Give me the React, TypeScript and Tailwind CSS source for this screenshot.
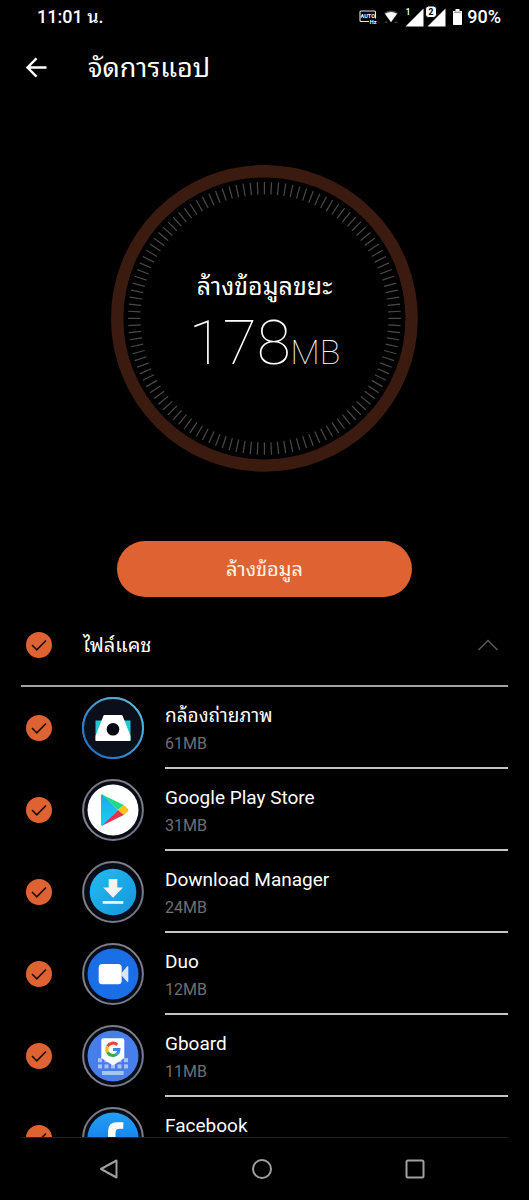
import { useState } from 'react';
import type { ReactNode } from 'react';

const TICKS = Array.from({ length: 120 }, (_, i) => i * 3);

function CameraIcon() {
  return (
    <>
      <circle cx="31" cy="31" r="30" fill="#0a0f1a" stroke="url(#ringBlue)" strokeWidth="2" />
      <path d="M13.500 23.500H48.500V44H13.500Z" fill="#1fc8cf" />
      <path d="M22.500 18H39.500Q40.300 18 40.600 18.800L48.500 39V43Q48.500 44 47.500 44H14.500Q13.500 44 13.500 43V39L21.400 18.800Q21.700 18 22.500 18Z" fill="#fff" />
      <circle cx="31" cy="32.300" r="6.300" fill="#05080e" />
    </>
  );
}

function PlayIcon() {
  return (
    <>
      <circle cx="31" cy="31" r="25.500" fill="#fff" />
      <path d="M19 16.500Q19 15 20.500 15.500L36 31L20.500 46.500Q19 47 19 45.500Z" fill="url(#playBlue)" />
      <path d="M19.500 15.200L41.700 26L36 31Z" fill="#22d886" />
      <path d="M41.700 25.900L46 30Q47 31 46 32L41.700 36.200L36 31Z" fill="#fbc21c" />
      <path d="M19.500 46.900L41.700 36.100L36 31Z" fill="#dd3450" />
    </>
  );
}

function DownloadIcon() {
  return (
    <>
      <circle cx="31" cy="31" r="23.300" fill="url(#downBlue)" />
      <path d="M26.700 18H35.300V26.500H41L31 36.700L21.300 26.500H26.700Z" fill="#f4f4f4" />
      <path d="M20.700 40H41.300V42.800H20.700Z" fill="#f4f4f4" />
    </>
  );
}

function DuoIcon() {
  return (
    <>
      <circle cx="31" cy="31" r="25.500" fill="#1a6ee6" />
      <path d="M39.500 30L45.200 23.300Q46.300 22.500 46.300 24V38Q46.300 39.500 45.200 38.700L39.500 32.500Z" fill="#dbe6fb" />
      <rect x="16.700" y="21" width="23" height="20.300" rx="3.500" fill="#fff" />
    </>
  );
}

function GboardIcon() {
  return (
    <>
      <circle cx="31" cy="31" r="25.500" fill="#487ee9" />
      <g fill="#a9c3f7">
        {[16, 22.5, 29, 35.5, 42].map(x => <rect key={x} x={x} y="33.200" width="4" height="4" />)}
        {[16, 22.5, 29, 35.5, 42].map(x => <rect key={x} x={x} y="39.400" width="4" height="4" />)}
        <rect x="20" y="46" width="21.600" height="4" />
      </g>
      <path d="M21 13.300H40.600Q42.300 13.300 42.300 15V33L31 40.500L19.300 33V15Q19.300 13.300 21 13.300Z" fill="#fff" />
      <g fill="none" strokeWidth="3">
        <path d="M35.200 19.800A6.200 6.200 0 0 0 25.500 21.400" stroke="#e94335" />
        <path d="M25.500 21.400A6.200 6.200 0 0 0 25.500 27.200" stroke="#fbbc05" />
        <path d="M25.500 27.200A6.200 6.200 0 0 0 34.800 29.100" stroke="#34a853" />
        <path d="M34.800 29.100A6.200 6.200 0 0 0 37 24.500H31" stroke="#4285f4" />
      </g>
    </>
  );
}

function FacebookIcon() {
  return (
    <>
      <circle cx="31" cy="31" r="25.500" fill="url(#fbBlue)" />
      <path d="M26 56V38.500H20.500V32H26V24.500Q26 15.200 35 15.200H41.300V21.800H37.500Q33.500 21.800 33.500 26V32H41L40 38.500H33.500V56Z" fill="#fff" />
    </>
  );
}

const APPS: { id: string; name: string; size?: string; icon: ReactNode }[] = [
  { id: 'camera', name: 'กล้องถ่ายภาพ', size: '61MB', icon: <CameraIcon /> },
  { id: 'play', name: 'Google Play Store', size: '31MB', icon: <PlayIcon /> },
  { id: 'download', name: 'Download Manager', size: '24MB', icon: <DownloadIcon /> },
  { id: 'duo', name: 'Duo', size: '12MB', icon: <DuoIcon /> },
  { id: 'gboard', name: 'Gboard', size: '11MB', icon: <GboardIcon /> },
  { id: 'facebook', name: 'Facebook', icon: <FacebookIcon /> },
];

function AppIcon({ children }: { children: ReactNode }) {
  return (
    <svg viewBox="0 0 62 62" className="size-[62px] shrink-0" aria-hidden="true">
      <defs>
        <linearGradient id="ringBlue" x1="1" y1="0" x2="0" y2="1"><stop offset="0" stopColor="#5fc3dc" /><stop offset="1" stopColor="#1766c4" /></linearGradient>
        <linearGradient id="ringGray" x1="0" y1="0" x2="1" y2="1"><stop offset="0" stopColor="#73737f" /><stop offset="0.5" stopColor="#858592" /><stop offset="1" stopColor="#6a7080" /></linearGradient>
        <linearGradient id="playBlue" x1="0" y1="0" x2="0" y2="1"><stop offset="0" stopColor="#1fa5ea" /><stop offset="1" stopColor="#19d2f5" /></linearGradient>
        <linearGradient id="downBlue" x1="0" y1="0" x2="1" y2="1"><stop offset="0" stopColor="#22bcf0" /><stop offset="1" stopColor="#1595dc" /></linearGradient>
        <linearGradient id="fbBlue" x1="0" y1="0" x2="0" y2="1"><stop offset="0" stopColor="#23a0f5" /><stop offset="1" stopColor="#0b6be6" /></linearGradient>
      </defs>
      <circle cx="31" cy="31" r="29.900" fill="#080c16" stroke="url(#ringGray)" strokeWidth="2" />
      {children}
    </svg>
  );
}

function RoundCheck({ id, checked, onChange }: { id: string; checked: boolean; onChange: () => void }) {
  return (
    <span className="grid size-[26px] shrink-0">
      <input id={id} type="checkbox" checked={checked} onChange={onChange}
        className="[grid-area:1/1] size-full appearance-none rounded-full border-2 border-[#df6332] checked:bg-[#df6332]" />
      {checked && (
        <svg viewBox="0 0 26 26" className="pointer-events-none [grid-area:1/1] size-full" fill="none" stroke="#1c0c06" strokeWidth="1.600" aria-hidden="true">
          <path d="M6 13L10.800 17.800L20 8.500" />
        </svg>
      )}
    </span>
  );
}

function StatusBar() {
  return (
    <div className="flex h-8 shrink-0 items-center justify-between pl-[37px] pr-7 pt-0.5 text-lg font-medium">
      <span>11:01 น.</span>
      <div className="flex items-center gap-[6px]">
        <svg viewBox="0 0 18 16" className="h-4 w-[18px]" aria-hidden="true">
          <path d="M10 12.500H2Q1 12.500 1 11.500V3Q1 2 2 2H15.500Q16.500 2 16.500 3V9.500" fill="none" stroke="#e8e8e8" strokeWidth="1.100" />
          <text x="8.800" y="9" textAnchor="middle" fontSize="5.500" fontWeight="700" fill="#fff">AUTO</text>
          <text x="10.800" y="14.800" fontSize="5.500" fontWeight="700" fill="#fff">Hz</text>
        </svg>
        <svg viewBox="0 0 16 16" className="size-4" aria-hidden="true">
          <path d="M1 4Q8 -1 15 4L8 13.500Z" fill="#4c4c4c" />
          <path d="M2 4.800Q8 1.400 14 4.800L8 13Z" fill="#fff" />
          <path d="M3 12l1.500 2h-3zM13 12l1.500 2h-3z" fill="#444" />
        </svg>
        <svg viewBox="0 0 41 22" className="h-[22px] w-[41px]" aria-hidden="true">
          <path d="M18.500 2.500V20.500H0.500Z" fill="#fff" />
          <text x="0.500" y="8.500" fontSize="9" fontWeight="500" fill="#fff">1</text>
          <path d="M40.500 2.500V20.500H22.500Z" fill="#fff" />
          <rect x="20.500" y="0" width="11" height="11.500" rx="3" fill="#fff" stroke="#000" strokeWidth="1" />
          <text x="26" y="8.800" textAnchor="middle" fontSize="8.500" fontWeight="800" fill="#000">2</text>
        </svg>
        <div className="flex items-center gap-1">
          <svg viewBox="0 0 11 18" className="h-[18px] w-[11px]" aria-hidden="true">
            <path d="M3.500 1H7.500V3H10V16.200Q10 17 9.200 17H1.800Q1 17 1 16.200V3H3.500Z" fill="#fff" />
            <path d="M2 4.200H9" stroke="#555" strokeWidth="0.800" />
          </svg>
          <span>90%</span>
        </div>
      </div>
    </div>
  );
}

export default function App() {
  const [selected, setSelected] = useState<string[]>(APPS.map(a => a.id));
  const [open, setOpen] = useState(true);

  const allSelected = selected.length === APPS.length;
  const toggle = (id: string) => setSelected(s => (s.includes(id) ? s.filter(x => x !== id) : [...s, id]));
  const toggleAll = () => setSelected(allSelected ? [] : APPS.map(a => a.id));

  return (
    <div className="flex h-screen flex-col overflow-hidden bg-black font-[Roboto,'Noto_Sans_Thai_Looped','Noto_Looped_Thai',Loma,Garuda,Waree,'Noto_Sans',sans-serif] text-white">
      <StatusBar />

      <header className="flex h-[72px] shrink-0 items-center gap-10 pl-6">
        <button type="button" aria-label="กลับ">
          <svg viewBox="0 0 24 24" className="size-6" fill="none" stroke="#fff" strokeWidth="2.400" aria-hidden="true">
            <path d="M22.500 11.500H4M12.500 2.300L3.500 11.500L12.500 20.700" />
          </svg>
        </button>
        <h1 className="text-[27px] leading-9">จัดการแอป</h1>
      </header>

      <main className="flex min-h-0 flex-1 flex-col overflow-hidden">
        {/* Gauge */}
        <div className="mt-[61px] grid aspect-square w-[58%] shrink-0 place-items-center self-center">
          <svg viewBox="0 0 307 307" className="[grid-area:1/1] size-full" fill="none" aria-hidden="true">
            <circle cx="153.500" cy="153.500" r="147.300" stroke="#3b1a0f" strokeWidth="12.400" />
            {TICKS.map(deg => (
              <path key={deg} d="M153.500 17V29.500" stroke="#4a4a4a" strokeWidth="1.200" transform={`rotate(${deg} 153.5 153.5)`} />
            ))}
          </svg>
          <div className="[grid-area:1/1] flex flex-col items-center gap-0.5 pt-5">
            <p className="text-[25px] leading-9">ล้างข้อมูลขยะ</p>
            <p className="text-[62px] font-thin leading-[72px]">178<span className="text-[34px]">MB</span></p>
          </div>
        </div>

        <button type="button" className="mt-[69px] h-14 w-[295px] max-w-full shrink-0 self-center rounded-full bg-[#df6332] text-xl text-[#fff3e8]">ล้างข้อมูล</button>

        {/* Cache group */}
        <div className="mx-[21px] mt-2 flex h-[82px] shrink-0 items-center border-b-2 border-[#a0a2a2] pl-[5px] pr-[9px]">
          <RoundCheck id="all" checked={allSelected} onChange={toggleAll} />
          <label htmlFor="all" className="flex-1 pl-[31px] text-xl leading-7">ไฟล์แคช</label>
          <button type="button" aria-label="ไฟล์แคช" aria-expanded={open} onClick={() => setOpen(!open)}>
            <svg viewBox="0 0 22 12" className="h-3 w-[22px]" fill="none" stroke="#5a5a5a" strokeWidth="1.500" aria-hidden="true">
              <path d="M1.500 11L11 1.500L20.500 11" />
            </svg>
          </button>
        </div>

        {open && (
          <ul className="min-h-0 flex-1 overflow-hidden">
            {APPS.map(app => (
              <li key={app.id} className="flex h-[82px] items-center pl-[26px] pr-[21px]">
                <RoundCheck id={app.id} checked={selected.includes(app.id)} onChange={() => toggle(app.id)} />
                <label htmlFor={app.id} className="flex h-full flex-1 items-center gap-[21px] pl-[30px]">
                  <AppIcon>{app.icon}</AppIcon>
                  <span className="flex h-full flex-1 flex-col border-b-2 border-[#c4c6c6] pt-[15px]">
                    <span className="text-[19px] leading-7">{app.name}</span>
                    {app.size && <span className="text-base leading-7 text-[#6f6f6f]">{app.size}</span>}
                  </span>
                </label>
              </li>
            ))}
          </ul>
        )}
      </main>

      <div className="mx-[21px] border-t border-[#242424]" />
      <nav className="grid h-[62px] shrink-0 grid-cols-3 items-center justify-items-center pl-[34px] pr-[38px]">
        <button type="button" aria-label="ย้อนกลับ">
          <svg viewBox="0 0 22 22" className="size-[22px]" fill="none" stroke="#a0a0a0" strokeWidth="2" strokeLinejoin="round" aria-hidden="true"><path d="M17.500 2.500V19.500L2 11Z" /></svg>
        </button>
        <button type="button" aria-label="หน้าแรก">
          <svg viewBox="0 0 22 22" className="size-[22px]" fill="none" stroke="#a0a0a0" strokeWidth="2" aria-hidden="true"><circle cx="11" cy="11" r="9" /></svg>
        </button>
        <button type="button" aria-label="ล่าสุด">
          <svg viewBox="0 0 22 22" className="size-[22px]" fill="none" stroke="#a0a0a0" strokeWidth="2" aria-hidden="true"><rect x="2.500" y="2.500" width="17" height="17" rx="1.500" /></svg>
        </button>
      </nav>
    </div>
  );
}
